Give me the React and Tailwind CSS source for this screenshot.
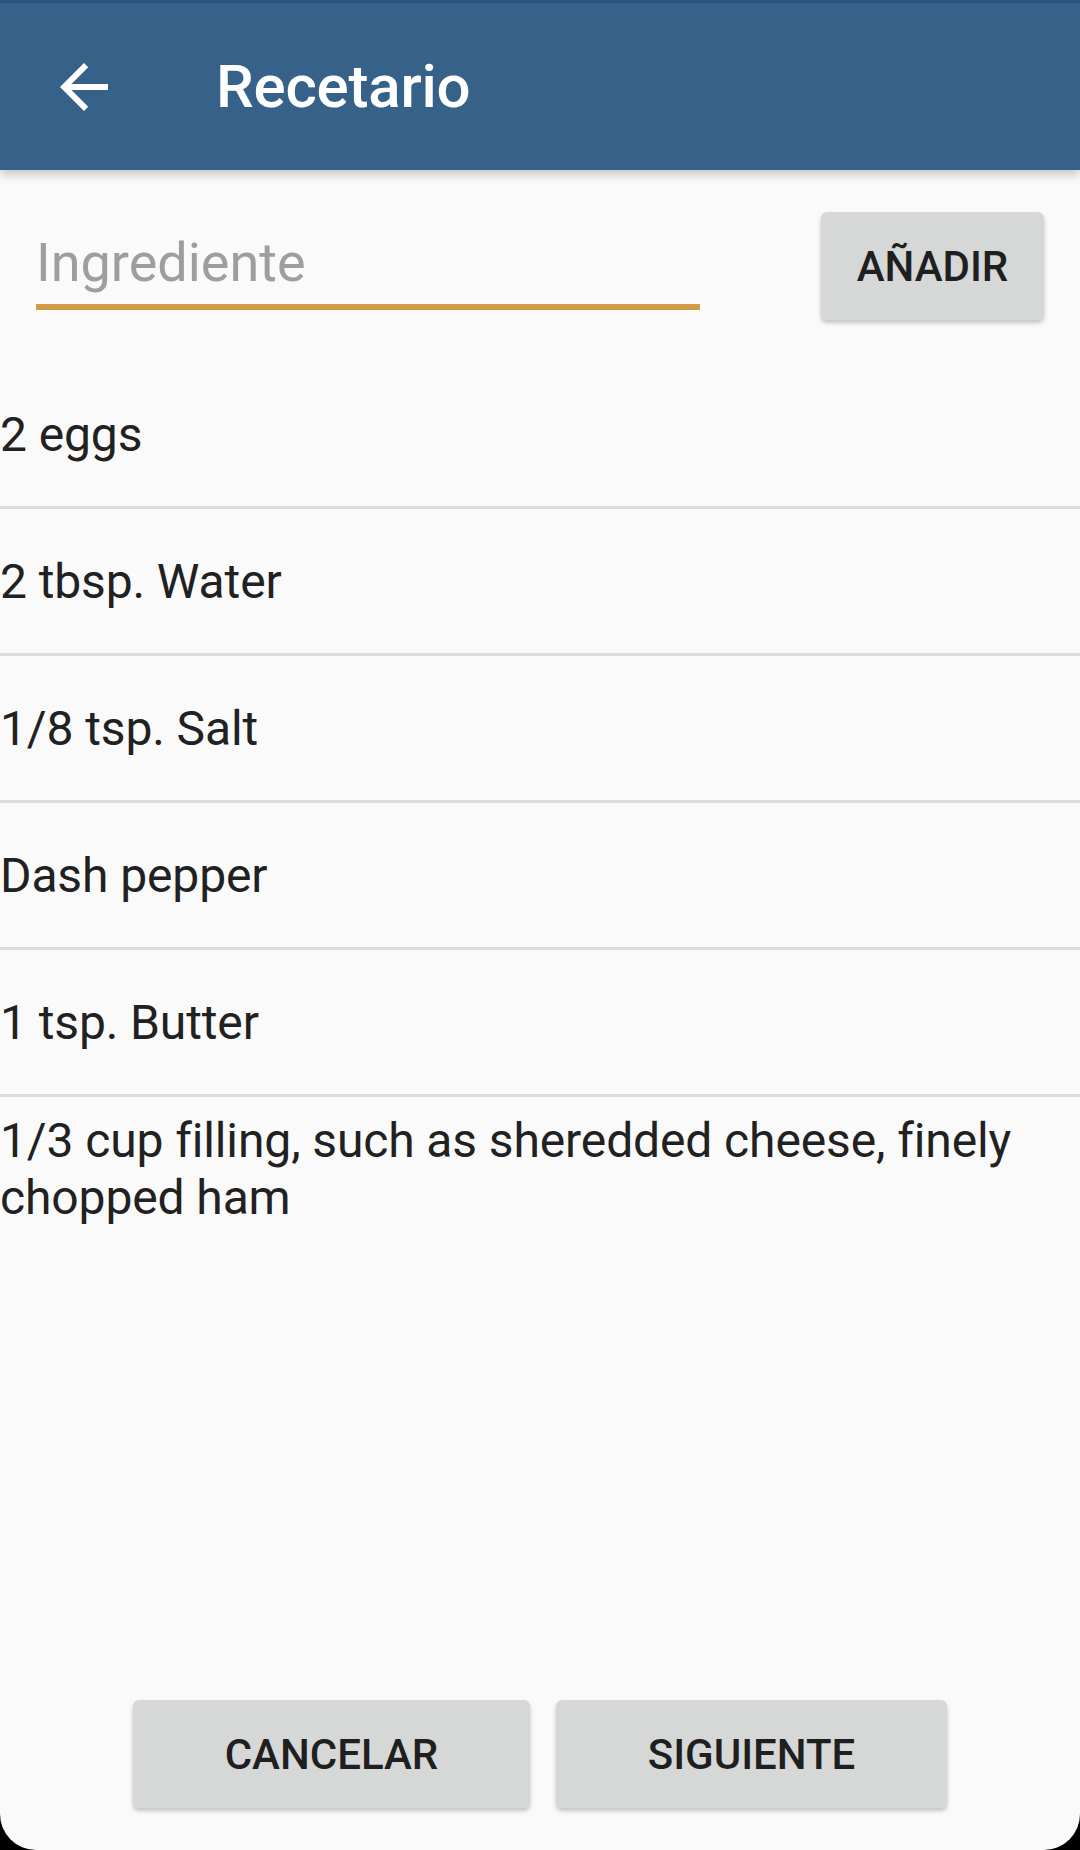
const ingredients = [
  "2 eggs",
  "2 tbsp. Water",
  "1/8 tsp. Salt",
  "Dash pepper",
  "1 tsp. Butter",
  "1/3 cup filling, such as sheredded cheese, finely chopped ham",
];

function BackArrow() {
  return (
    <svg width="48" height="48" viewBox="4 4 16 16" fill="#ffffff">
      <path d="M20 11H7.83l5.59-5.59L12 4l-8 8 8 8 1.41-1.41L7.83 13H20v-2z" />
    </svg>
  );
}

export default function App() {
  return (
    <div className="bg-black w-[1080px] h-[1850px] font-['Roboto',sans-serif]">
      <div className="relative flex flex-col w-[1080px] h-[1850px] bg-[#fafafa] rounded-b-[36px] overflow-hidden">
        <header className="relative z-10 h-[170px] bg-[#366189] border-t-[3px] border-[#2a5480] flex items-center shadow-[0_4px_10px_rgba(0,0,0,0.22)]">
          <div className="w-[60px]" />
          <BackArrow />
          <h1 className="ml-[108px] text-[60px] leading-none font-medium tracking-[-0.2px] text-white">Recetario</h1>
        </header>

        <div className="flex items-start h-[192px]">
          <div className="ml-[36px] mt-[61px] w-[664px]">
            <div className="text-[54px] leading-[64px] text-[#9e9e9e]">Ingrediente</div>
            <div className="h-[6px] bg-[#d39a48] mt-[9px]" />
          </div>
          <button className="ml-[121px] mt-[42px] w-[223px] h-[108px] rounded-[6px] bg-[#d6d7d7] text-[42px] font-medium text-[#1f1f1f] shadow-[0_3px_4px_rgba(0,0,0,0.22)]">
            AÑADIR
          </button>
        </div>

        <ul className="flex flex-col">
          {ingredients.map((item, i) => (
            <li
              key={item}
              className={
                i < ingredients.length - 1
                  ? "min-h-[147px] flex items-center border-b-[3px] border-[#dcdcdc] text-[48px] leading-[57px] tracking-[-0.12px] text-[#212121]"
                  : "min-h-[144px] flex items-center text-[48px] leading-[57px] tracking-[-0.12px] text-[#212121]"
              }
            >
              {item}
            </li>
          ))}
        </ul>

        <div className="flex-1" />

        <div className="flex justify-center gap-[26px] mb-[42px]">
          <button className="w-[397px] h-[108px] rounded-[6px] bg-[#d6d7d7] text-[42px] font-medium text-[#1f1f1f] shadow-[0_3px_4px_rgba(0,0,0,0.22)]">
            CANCELAR
          </button>
          <button className="w-[391px] h-[108px] rounded-[6px] bg-[#d6d7d7] text-[42px] font-medium text-[#1f1f1f] shadow-[0_3px_4px_rgba(0,0,0,0.22)]">
            SIGUIENTE
          </button>
        </div>
      </div>
    </div>
  );
}
